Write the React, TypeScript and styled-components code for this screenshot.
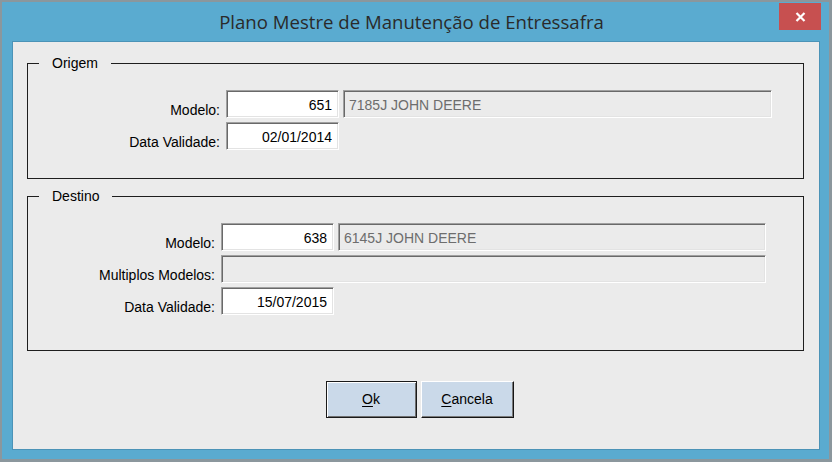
import styled, { createGlobalStyle } from 'styled-components';

const GlobalStyle = createGlobalStyle`
  html, body {
    margin: 0;
    padding: 0;
    background: #ebebeb;
  }
  * {
    box-sizing: border-box;
  }
`;

const labelFont = `"Liberation Sans", Arial, sans-serif`;

export default function App() {
  return (
    <>
      <GlobalStyle />
      <Window>
        <TitleBar>
          <span />
          <Title>Plano Mestre de Manutenção de Entressafra</Title>
          <CloseButton aria-label="Fechar">
            <svg width="11" height="10" viewBox="0 0 11 10">
              <path d="M1.5 1 L9.5 9 M9.5 1 L1.5 9" stroke="#fff" strokeWidth="2.2" fill="none" />
            </svg>
          </CloseButton>
        </TitleBar>
        <Client>
          <Group>
            <Caption>Origem</Caption>
            <Fields $labelWidth={194} $descWidth={429} $bottom={27}>
              <Label>Modelo:</Label>
              <Input readOnly value="651" $align="right" />
              <Input readOnly disabled value="7185J JOHN DEERE" />
              <Label>Data Validade:</Label>
              <Input readOnly value="02/01/2014" $align="right" />
            </Fields>
          </Group>

          <Group $gap={17}>
            <Caption>Destino</Caption>
            <Fields $labelWidth={189} $descWidth={428} $bottom={34}>
              <Label>Modelo:</Label>
              <Input readOnly value="638" $align="right" />
              <Input readOnly disabled value="6145J JOHN DEERE" />
              <Label>Multiplos Modelos:</Label>
              <Input readOnly disabled value="" $span />
              <Label>Data Validade:</Label>
              <Input readOnly value="15/07/2015" $align="right" />
            </Fields>
          </Group>

          <Buttons>
            <Button $default>
              <u>O</u>k
            </Button>
            <Button $width={93}>
              <u>C</u>ancela
            </Button>
          </Buttons>
        </Client>
      </Window>
    </>
  );
}

const Window = styled.div`
  width: 832px;
  height: 462px;
  display: flex;
  flex-direction: column;
  background: #5aabd0;
  border-style: solid;
  border-color: #8b979d;
  border-width: 2px 3px 3px 2px;
`;

const TitleBar = styled.div`
  height: 39px;
  flex-shrink: 0;
  display: grid;
  grid-template-columns: 1fr auto 1fr;
  align-items: center;
  padding-right: 8px;
`;

const Title = styled.div`
  font-family: "Open Sans", "Noto Sans", sans-serif;
  font-size: 18.6px;
  color: #2a2a2a;
  white-space: nowrap;
  padding-bottom: 1px;
`;

const CloseButton = styled.div`
  justify-self: end;
  align-self: start;
  margin-top: 1px;
  width: 42px;
  height: 27px;
  background: #c75050;
  display: flex;
  align-items: center;
  justify-content: center;
`;

const Client = styled.div`
  flex: 1;
  margin: 0 9px 9px 10px;
  background: #ebebeb;
  border: 1px solid #4b93b7;
  padding: 0 15px 0 14px;
  display: flex;
  flex-direction: column;
  font-family: ${labelFont};
  font-size: 14px;
  color: #000;
`;

const Group = styled.div<{ $gap?: number }>`
  margin-top: ${({ $gap }) => $gap ?? 21}px;
  border: 1px solid #1e1e1e;
`;

const Caption = styled.div`
  width: fit-content;
  height: 16px;
  line-height: 16px;
  margin: -9px 0 0 11px;
  padding: 0 13px;
  background: #ebebeb;
`;

const Fields = styled.div<{ $labelWidth: number; $descWidth: number; $bottom: number }>`
  display: grid;
  grid-template-columns: ${({ $labelWidth, $descWidth }) => `${$labelWidth}px 113px ${$descWidth}px`};
  grid-auto-rows: 28px;
  column-gap: 4px;
  row-gap: 4px;
  margin-top: 19px;
  padding-bottom: ${({ $bottom }) => $bottom + 1}px;
`;

const Label = styled.div`
  grid-column: 1;
  align-self: end;
  justify-self: end;
  line-height: 16px;
  margin-right: 2px;
  white-space: nowrap;
`;

const Input = styled.input<{ $align?: 'left' | 'right'; $span?: boolean }>`
  ${({ $span }) => ($span ? 'grid-column: 2 / span 2;' : '')}
  width: 100%;
  height: 28px;
  margin: 0;
  padding: 1px 6px 0 5px;
  font-family: ${labelFont};
  font-size: 14px;
  text-align: ${({ $align }) => $align ?? 'left'};
  color: #000;
  background: #fff;
  border: 1px solid;
  border-color: #a0a0a0 #fff #fff #a0a0a0;
  box-shadow: inset 1px 1px 0 #696969, inset -1px -1px 0 #e3e3e3;
  outline: none;

  &:disabled {
    background: #ebebeb;
    color: #6d6d6d;
    -webkit-text-fill-color: #6d6d6d;
    opacity: 1;
  }
`;

const Buttons = styled.div`
  display: flex;
  justify-content: center;
  gap: 4px;
  margin-top: 30px;
  padding-left: 8px;
`;

const Button = styled.button<{ $default?: boolean; $width?: number }>`
  width: ${({ $width }) => $width ?? 91}px;
  height: 37px;
  margin: 0;
  padding: 0 0 1px;
  font-family: ${labelFont};
  font-size: 14px;
  color: #000;
  background: #cad9e9;
  border: 1px solid;
  border-color: ${({ $default }) => ($default ? '#1a1a1a' : '#fff #141414 #141414 #fff')};
  box-shadow: ${({ $default }) =>
    $default
      ? 'inset 1px 1px 0 #fff, inset -1px -1px 0 #6f6f6f'
      : 'inset -1px -1px 0 #7a7a7a'};

  u {
    text-underline-offset: 2px;
  }
`;
